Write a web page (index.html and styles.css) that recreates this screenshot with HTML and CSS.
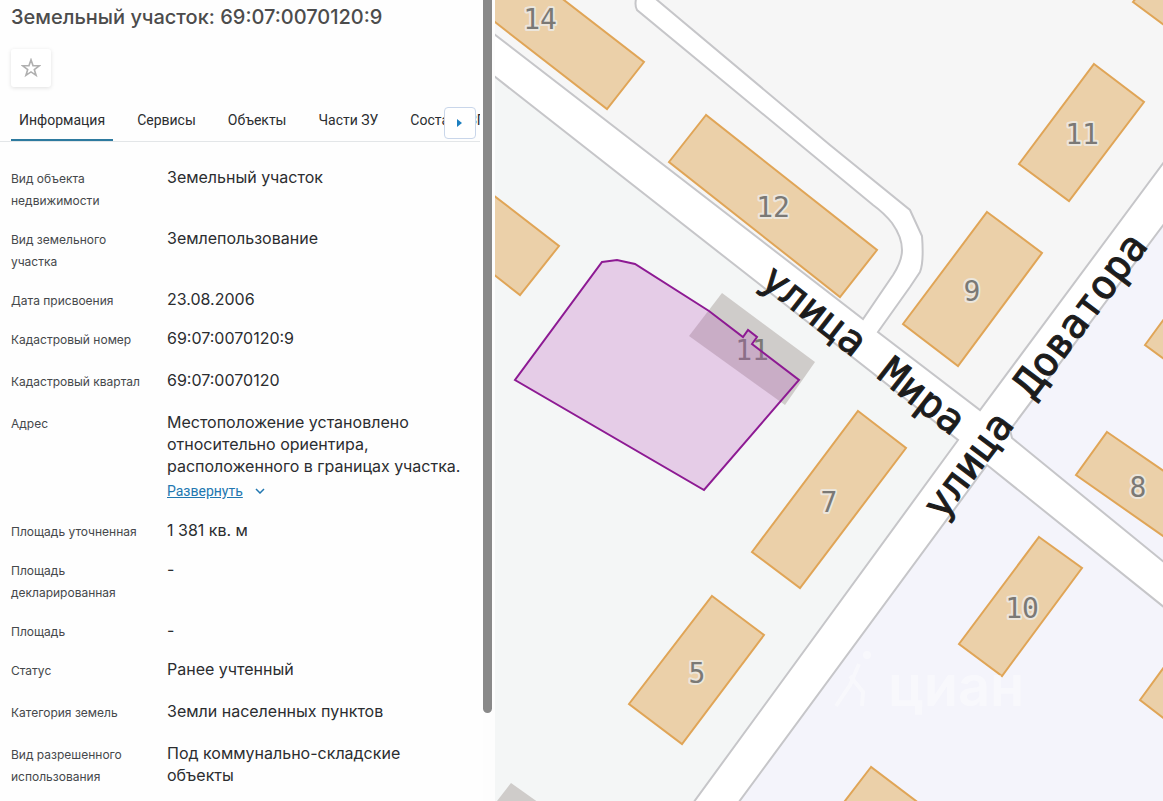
FILE: index.html
```html
<!DOCTYPE html>
<html lang="ru">
<head>
    <meta charset="utf-8">
    <title>Земельный участок: 69:07:0070120:9</title>
    <link rel="stylesheet" href="styles.css">
</head>
<body>
    <div class="panel">
        <h1>Земельный участок: 69:07:0070120:9</h1>
        <button class="favorite" type="button" aria-label="В избранное">
            <svg width="20" height="20" viewBox="0 0 20 20">
                <path d="M10 1.8 L12 7.6 L18.2 7.8 L13.3 11.5 L15.1 17.4 L10 13.9 L4.9 17.4 L6.7 11.5 L1.8 7.8 L8 7.6 Z"/>
            </svg>
        </button>

        <!-- Вкладки -->
        <div class="tabs-wrap">
            <nav class="tabs">
                <a href="#info" class="tab active">Информация</a>
                <a href="#services" class="tab">Сервисы</a>
                <a href="#objects" class="tab">Объекты</a>
                <a href="#parts" class="tab">Части ЗУ</a>
                <a href="#ezp" class="tab">Состав ЕЗП</a>
            </nav>
            <button class="tabs-next" type="button" aria-label="Вперед">
                <svg width="6" height="10" viewBox="0 0 6 10"><path d="M0 1 L5 5 L0 9 Z"/></svg>
            </button>
        </div>

        <!-- Сведения об участке -->
        <dl class="info" id="info">
            <div class="row"><dt>Вид объекта недвижимости</dt><dd>Земельный участок</dd></div>
            <div class="row"><dt>Вид земельного участка</dt><dd>Землепользование</dd></div>
            <div class="row"><dt>Дата присвоения</dt><dd>23.08.2006</dd></div>
            <div class="row tall"><dt>Кадастровый номер</dt><dd>69:07:0070120:9</dd></div>
            <div class="row tall"><dt>Кадастровый квартал</dt><dd>69:07:0070120</dd></div>
            <div class="row">
                <dt>Адрес</dt>
                <dd>
                    Местоположение установлено относительно ориентира, расположенного в границах участка.
                    <div class="more">
                        <a href="#address">Развернуть</a>
                        <svg width="10" height="6" viewBox="0 0 10 6"><path d="M1 1 L5 5 L9 1"/></svg>
                    </div>
                </dd>
            </div>
            <div class="row"><dt>Площадь уточненная</dt><dd>1 381 кв. м</dd></div>
            <div class="row"><dt>Площадь декларированная</dt><dd>-</dd></div>
            <div class="row"><dt>Площадь</dt><dd>-</dd></div>
            <div class="row tall"><dt>Статус</dt><dd>Ранее учтенный</dd></div>
            <div class="row tall"><dt>Категория земель</dt><dd>Земли населенных пунктов</dd></div>
            <div class="row"><dt>Вид разрешенного использования</dt><dd>Под коммунально-складские объекты</dd></div>
        </dl>
    </div>

    <div class="scrollbar"><div class="thumb"></div></div>

    <!-- Карта -->
    <svg class="map" viewBox="495 0 668 801" preserveAspectRatio="xMinYMin slice">
        <!-- Кварталы, между ними белые дороги -->
        <g class="block">
            <path class="green" d="M485 69 L958 440 L688 810 H485 Z"/>
            <path d="M485 27 L863 319 L893 275 Q902 261 902 250 Q902 237 892 223 Q884 213 873 205 L637 10 Q634 5 637 -5 H485 Z"/>
            <path d="M650 -6 L830 145 L910 210 L922 236 Q924 262 920 272 L910 287 L878 332 L980 410 L1170 154 V-6 Z"/>
        </g>
        <g class="block lilac">
            <path d="M987 465 L1170 612 V810 H733 Z"/>
            <path d="M1170 216 L1010 430 L1012 438 L1170 567 Z"/>
        </g>

        <!-- Дома -->
        <g class="house">
            <path d="M644 62 L607 109 L455 -9 L480 -65 Z"/>
            <path d="M706 115 L669 162 L840 297 L877 250 Z"/>
            <path d="M475 181 L559 246 L520 295 L475 260 Z"/>
            <path d="M1094 64 L1144 102 L1069 201 L1019 164 Z"/>
            <path d="M987 212 L1042 253 L958 366 L903 324 Z"/>
            <path d="M858 411 L906 448 L800 588 L752 552 Z"/>
            <path d="M712 596 L764 635 L682 744 L629 704 Z"/>
            <path d="M1039 537 L1082 568 L1002 676 L959 644 Z"/>
            <path d="M1107 432 L1190 489 L1190 555 L1076 475 Z"/>
            <path d="M1145 345 L1175 304 V367 Z"/>
            <path d="M1133 2 L1175 33 V-10 H1142 Z"/>
            <path d="M871 767 L838 810 H928 Z"/>
            <path d="M1140 700 L1175 652 V727 Z"/>
        </g>
        <g class="shed">
            <path d="M722 293 L815 362 L785 405 L689 336 Z"/>
            <path d="M511 783 L490 810 H549 Z"/>
        </g>

        <g class="number">
            <text x="540" y="29">14</text>
            <text x="773" y="217">12</text>
            <text x="1082" y="144">11</text>
            <text x="972" y="301">9</text>
            <text x="829" y="512">7</text>
            <text x="697" y="683">5</text>
            <text x="1022" y="618">10</text>
            <text x="1138" y="497">8</text>
            <text x="752" y="360" class="plain">11</text>
        </g>
        <g class="street">
            <text transform="translate(806 321) rotate(38)">улица</text>
            <text transform="translate(914 407) rotate(38)">Мира</text>
            <text transform="translate(979 473) rotate(-53)">улица</text>
            <text transform="translate(1091 323) rotate(-53)">Доватора</text>
        </g>

        <!-- Граница участка -->
        <path class="parcel" d="M602 262 L617 260 L635 264 L709 311 L743 337 L748 330 L757 337 L752 344 L799 380 L704 490 L515 380 Z"/>

        <!-- Водяной знак -->
        <g class="watermark">
            <circle cx="867" cy="655" r="4"/>
            <path d="M859 664 L850 685 L836 706 M850 676 L863 692 L862 706"/>
            <text x="888" y="706">циан</text>
        </g>
    </svg>
</body>
</html>
```

FILE: styles.css
```css
* {
    box-sizing: border-box;
}
body {
    margin: 0;
    height: 100vh;
    display: flex;
    overflow: hidden;
    background: #fff;
    color: #2b2d30;
    font-family: Inter, "Liberation Sans", sans-serif;
}

/* Левая панель */
.panel {
    flex: 0 0 483px;
    min-width: 0;
    overflow: hidden;
    background: #fefefe;
}
h1 {
    margin: 5px 11px 20px;
    font-size: 20px;
    line-height: 24px;
    font-weight: 500;
    color: #4c4c4c;
}
.favorite {
    display: flex;
    align-items: center;
    justify-content: center;
    width: 40px;
    height: 38px;
    margin: 0 11px 12px;
    padding: 0;
    border: none;
    border-radius: 3px;
    background: #fff;
    box-shadow: 0 1px 4px rgba(0, 0, 0, 0.12);
    cursor: pointer;
}
.favorite path {
    fill: none;
    stroke: #b0b0b0;
    stroke-width: 1.6;
}

/* Вкладки */
.tabs-wrap {
    position: relative;
    margin-right: 3px;
}
.tabs {
    display: flex;
    gap: 16px;
    padding-left: 11px;
    overflow: hidden;
    border-bottom: 1px solid #e3e6e8;
}
.tab {
    flex: none;
    padding: 11px 8px 9px;
    border-bottom: 2px solid transparent;
    font-family: Roboto, "Liberation Sans", sans-serif;
    font-size: 14px;
    line-height: 20px;
    color: #2b2d30;
    text-decoration: none;
}
.tab.active {
    border-bottom-color: #2d7a9f;
}
.tabs-next {
    position: absolute;
    top: 8px;
    right: 4px;
    display: flex;
    align-items: center;
    justify-content: center;
    width: 32px;
    height: 32px;
    padding: 0;
    border: 1px solid #c9d6ea;
    border-radius: 4px;
    background: #fff;
    cursor: pointer;
}
.tabs-next path {
    fill: #1c7fc0;
}

/* Список характеристик */
.info {
    margin: 0;
    padding: 24px 20px 0 11px;
}
.row {
    display: grid;
    grid-template-columns: 140px 1fr;
    gap: 16px;
    padding-bottom: 17px;
}
.row.tall {
    padding-bottom: 20px;
}
dt {
    padding-top: 2px;
    margin-bottom: -2px;
    font-size: 12px;
    line-height: 22px;
    color: #45484b;
}
dd {
    margin: 0;
    font-size: 16px;
    line-height: 22px;
}
.more {
    display: flex;
    align-items: center;
    gap: 12px;
    padding-top: 3px;
    font-family: Roboto, "Liberation Sans", sans-serif;
    font-size: 14px;
}
.more a {
    color: #2277b0;
}
.more path {
    fill: none;
    stroke: #2277b0;
    stroke-width: 1.5;
}

/* Полоса прокрутки */
.scrollbar {
    flex: 0 0 12px;
    background: #fdfdfd;
}
.thumb {
    width: 9px;
    height: 89%;
    border-radius: 0 0 5px 5px;
    background: #898989;
}

/* Карта */
.map {
    flex: 1;
    min-width: 0;
    height: 100%;
    background: #fff;
}
.block {
    fill: #f6f6f6;
    stroke: #c6c6c9;
    stroke-width: 2;
}
.green {
    fill: #f4f6f6;
}
.lilac {
    fill: #f4f4fb;
}
.house {
    fill: #ebd0a9;
    stroke: #e0a557;
    stroke-width: 2;
}
.shed {
    fill: #cfccca;
}
.number {
    font-family: "DejaVu Sans Mono", monospace;
    font-size: 28px;
    text-anchor: middle;
    fill: #7b7975;
    stroke: #ece6dc;
    stroke-width: 4px;
    stroke-linejoin: round;
    paint-order: stroke;
}
.number .plain {
    stroke: none;
}
.street {
    font-family: "DejaVu Sans Mono", monospace;
    font-size: 40px;
    text-anchor: middle;
    fill: #1c1c1c;
    stroke: #1c1c1c;
    stroke-width: 1px;
}
.parcel {
    fill: rgba(186, 85, 190, 0.26);
    stroke: #8d1a93;
    stroke-width: 2;
}
.watermark {
    fill: #fff;
    opacity: 0.4;
    font-family: Inter, sans-serif;
    font-size: 56px;
    font-weight: 600;
}
.watermark path {
    fill: none;
    stroke: #fff;
    stroke-width: 4;
}
```
